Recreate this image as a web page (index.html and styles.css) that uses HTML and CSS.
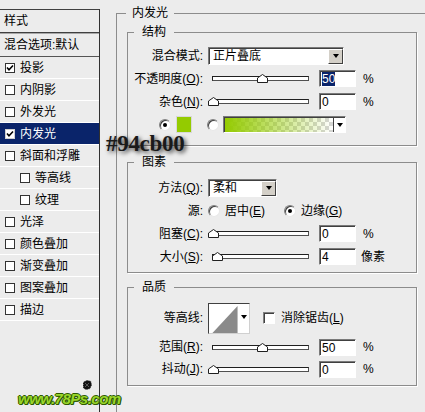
FILE: index.html
```html
<!DOCTYPE html>
<html lang="zh-CN">
<head>
<meta charset="utf-8">
<title>内发光</title>
<link rel="stylesheet" href="styles.css">
</head>
<body>
<div class="app">
  <aside class="sidebar">
    <div class="side-box">
      <div class="side-head">样式</div>
      <ul class="side-list">
        <li class="side-item blend">混合选项:默认</li>
        <li class="side-item"><span class="cb on"><svg viewBox="0 0 8 8"><polyline points="1,3.5 3,5.8 7,1.5"/></svg></span>投影</li>
        <li class="side-item"><span class="cb"></span>内阴影</li>
        <li class="side-item"><span class="cb"></span>外发光</li>
        <li class="side-item active"><span class="cb on"><svg viewBox="0 0 8 8"><polyline points="1,3.5 3,5.8 7,1.5"/></svg></span>内发光</li>
        <li class="side-item"><span class="cb"></span>斜面和浮雕</li>
        <li class="side-item sub"><span class="cb"></span>等高线</li>
        <li class="side-item sub"><span class="cb"></span>纹理</li>
        <li class="side-item"><span class="cb"></span>光泽</li>
        <li class="side-item"><span class="cb"></span>颜色叠加</li>
        <li class="side-item"><span class="cb"></span>渐变叠加</li>
        <li class="side-item"><span class="cb"></span>图案叠加</li>
        <li class="side-item"><span class="cb"></span>描边</li>
      </ul>
    </div>
  </aside>

  <main class="main">
    <fieldset class="outer">
      <legend>内发光</legend>

      <fieldset class="group g-struct">
        <legend>结构</legend>
        <div class="rows">
          <span class="lbl">混合模式:</span>
          <div class="ctl">
            <div class="select w-blend"><span class="sel-text">正片叠底</span><span class="sel-btn"></span></div>
          </div>

          <span class="lbl">不透明度(<u>O</u>):</span>
          <div class="ctl">
            <div class="slider" style="--v:50"><div class="track"></div><svg class="thumb" viewBox="0 0 11 9"><polygon points="0.5,8.5 0.5,4 5.5,0.5 10.5,4 10.5,8.5"/></svg></div>
            <div class="num"><span class="hl">50</span></div>
            <span class="unit">%</span>
          </div>

          <span class="lbl">杂色(<u>N</u>):</span>
          <div class="ctl">
            <div class="slider" style="--v:0"><div class="track"></div><svg class="thumb" viewBox="0 0 11 9"><polygon points="0.5,8.5 0.5,4 5.5,0.5 10.5,4 10.5,8.5"/></svg></div>
            <div class="num">0</div>
            <span class="unit">%</span>
          </div>

          <div class="color-row">
            <span class="radio on"></span>
            <span class="swatch"></span>
            <span class="radio r2"></span>
            <div class="gradbox"><span class="grad"></span><span class="grad-btn"></span></div>
          </div>
        </div>
      </fieldset>

      <fieldset class="group g-elem">
        <legend>图素</legend>
        <div class="rows">
          <span class="lbl">方法(<u>Q</u>):</span>
          <div class="ctl">
            <div class="select w-method"><span class="sel-text">柔和</span><span class="sel-btn"></span></div>
          </div>

          <span class="lbl">源:</span>
          <div class="ctl">
            <span class="opt first"><span class="radio"></span><span class="opt-text">居中(<u>E</u>)</span></span>
            <span class="opt"><span class="radio on"></span><span class="opt-text">边缘(<u>G</u>)</span></span>
          </div>

          <span class="lbl">阻塞(<u>C</u>):</span>
          <div class="ctl">
            <div class="slider" style="--v:0"><div class="track"></div><svg class="thumb" viewBox="0 0 11 9"><polygon points="0.5,8.5 0.5,4 5.5,0.5 10.5,4 10.5,8.5"/></svg></div>
            <div class="num">0</div>
            <span class="unit">%</span>
          </div>

          <span class="lbl">大小(<u>S</u>):</span>
          <div class="ctl">
            <div class="slider" style="--v:4"><div class="track"></div><svg class="thumb" viewBox="0 0 11 9"><polygon points="0.5,8.5 0.5,4 5.5,0.5 10.5,4 10.5,8.5"/></svg></div>
            <div class="num">4</div>
            <span class="unit px">像素</span>
          </div>
        </div>
      </fieldset>

      <fieldset class="group g-quality">
        <legend>品质</legend>
        <div class="rows">
          <span class="lbl">等高线:</span>
          <div class="ctl">
            <div class="contour">
              <svg class="curve" viewBox="0 0 26 28"><polygon points="0,28 26,0 26,28"/></svg>
              <span class="c-arrow"></span>
            </div>
            <span class="cb big"></span>
            <span class="cb-label">消除锯齿(<u>L</u>)</span>
          </div>

          <span class="lbl">范围(<u>R</u>):</span>
          <div class="ctl">
            <div class="slider" style="--v:50"><div class="track"></div><svg class="thumb" viewBox="0 0 11 9"><polygon points="0.5,8.5 0.5,4 5.5,0.5 10.5,4 10.5,8.5"/></svg></div>
            <div class="num">50</div>
            <span class="unit">%</span>
          </div>

          <span class="lbl">抖动(<u>J</u>):</span>
          <div class="ctl">
            <div class="slider" style="--v:0"><div class="track"></div><svg class="thumb" viewBox="0 0 11 9"><polygon points="0.5,8.5 0.5,4 5.5,0.5 10.5,4 10.5,8.5"/></svg></div>
            <div class="num">0</div>
            <span class="unit">%</span>
          </div>
        </div>
      </fieldset>
    </fieldset>
  </main>

  <div class="hex">#94cb00</div>

  <svg class="wm-bug" viewBox="0 0 14 14">
    <path d="M3 4 L7 2 L11 3 L12 7 L10 11 L6 12 L3 10 Z" fill="#111" stroke="#fff" stroke-width="0.8" stroke-dasharray="1 1"/>
    <path d="M5 5 L9 9 M9 5 L5 9" stroke="#555" stroke-width="1"/>
  </svg>
  <div class="wm">www.78Ps.com</div>
</div>
</body>
</html>
```

FILE: styles.css
```css
* { box-sizing: border-box; }

html, body {
  margin: 0;
  padding: 0;
}

body {
  width: 425px;
  height: 412px;
  overflow: hidden;
  background: #ececec;
  font-family: "Liberation Sans", "Noto Sans CJK SC", sans-serif;
  font-size: 12px;
  color: #000;
}

.app {
  position: relative;
  display: flex;
  height: 412px;
  overflow: hidden;
}

/* ---------- sidebar ---------- */
.sidebar {
  flex: none;
  width: 100px;
  padding-top: 9px;
  display: flex;
  flex-direction: column;
}

.side-box {
  flex: 1;
  border-top: 1px solid #404040;
  border-right: 1px solid #303030;
}

.side-head {
  height: 23px;
  line-height: 22px;
  padding-left: 4px;
  border-bottom: 1px solid #404040;
}

.side-list {
  list-style: none;
  margin: 0;
  padding: 0;
  border-top: 1px solid #a8a8a8;
}

.side-item {
  display: flex;
  align-items: center;
  gap: 5px;
  height: 22px;
  line-height: 14px;
  padding-left: 5px;
  border-bottom: 1px solid #ffffff;
  white-space: nowrap;
}

.side-item.blend {
  height: 23px;
  padding-left: 4px;
  border-bottom-color: #555;
}

.side-item.sub { padding-left: 20px; }

.side-item.active {
  background: #0a246a;
  color: #fff;
}

.cb {
  flex: none;
  width: 10px;
  height: 10px;
  background: #fff;
  border: 1px solid #333;
  display: flex;
  align-items: center;
  justify-content: center;
}

.cb svg {
  width: 8px;
  height: 8px;
  fill: none;
  stroke: #000;
  stroke-width: 1.6;
}

.active .cb { border-color: #d0d0d0; }

.cb.big {
  width: 12px;
  height: 12px;
  border-color: #808080 #fff #fff #808080;
  box-shadow: inset 1px 1px 0 #404040;
  margin-left: 13px;
}

.cb-label { margin-left: 6px; line-height: 14px; }

/* ---------- main ---------- */
.main {
  flex: 1;
  min-width: 0;
}

fieldset {
  margin: 0;
  padding: 0;
  min-width: 0;
  border: 1px solid #8c8c8c;
  box-shadow: 1px 1px 0 #fff;
}

legend {
  height: 14px;
  line-height: 14px;
  padding: 0 8px;
  margin-left: 6px;
}

.outer {
  margin: 6px 0 0 16px;
  width: 340px;
  height: 440px;
  padding: 0 10px;
}

.outer > legend {
  margin-left: -1px;
  padding: 0 6px;
}

.group { width: 290px; }

.g-struct { margin-top: 5px; }
.g-elem { margin-top: 9px; }
.g-quality { margin-top: 7px; }

.rows {
  display: grid;
  grid-template-columns: 75px 1fr;
  column-gap: 5px;
  grid-auto-rows: 23px;
  align-items: center;
}

.g-struct .rows { padding: 5px 0 9px; }
.g-elem .rows { padding: 7px 0 4px; }
.g-quality .rows {
  padding: 6px 0 5px;
  grid-template-rows: 36px 22px 22px;
}

.lbl {
  text-align: right;
  white-space: nowrap;
  line-height: 14px;
}

.ctl {
  display: flex;
  align-items: center;
  white-space: nowrap;
  line-height: 14px;
}

/* select */
.select {
  display: flex;
  height: 18px;
  background: #fff;
  border: 1px solid;
  border-color: #7a7a7a #fff #fff #7a7a7a;
  box-shadow: inset 1px 1px 0 #404040;
  padding: 1px 0 0 1px;
}

.w-blend { width: 136px; }
.w-method { width: 69px; }

.sel-text {
  flex: 1;
  padding-left: 3px;
  line-height: 15px;
}

.sel-btn {
  flex: none;
  width: 15px;
  background: #d4d0c8;
  border: 1px solid;
  border-color: #fff #404040 #404040 #fff;
  display: flex;
  align-items: center;
  justify-content: center;
}

.sel-btn::after,
.grad-btn::after,
.c-arrow::after {
  content: "";
  border-left: 3.5px solid transparent;
  border-right: 3.5px solid transparent;
  border-top: 4px solid #000;
}

/* slider */
.slider {
  position: relative;
  flex: none;
  width: 101px;
  height: 11px;
  padding: 3px 0 0 4px;
  margin-right: 10px;
}

.track {
  height: 5px;
  background: #fff;
  border: 1px solid;
  border-color: #202020 #505050 #505050 #202020;
}

.thumb {
  position: absolute;
  top: 1px;
  left: calc(var(--v) * 0.98px);
  width: 11px;
  height: 9px;
  fill: #fff;
  stroke: #202020;
  stroke-width: 1;
}

/* numeric input */
.num {
  flex: none;
  width: 37px;
  height: 17px;
  background: #fff;
  border: 1px solid;
  border-color: #7a7a7a #fff #fff #7a7a7a;
  box-shadow: inset 1px 1px 0 #404040;
  padding: 1px 0 0 2px;
  line-height: 14px;
}

.hl {
  background: #0a246a;
  color: #fff;
}

.unit { margin-left: 7px; }
.unit.px { margin-left: 5px; }

/* radios & colour row */
.radio {
  flex: none;
  width: 12px;
  height: 12px;
  border-radius: 50%;
  background: #fff;
  border: 1px solid;
  border-color: #808080 #e8e8e8 #e8e8e8 #808080;
  box-shadow: inset 1px 1px 0 #404040;
  display: flex;
  align-items: center;
  justify-content: center;
}

.radio.on::after {
  content: "";
  width: 4px;
  height: 4px;
  border-radius: 50%;
  background: #000;
}

.color-row {
  grid-column: 1 / -1;
  display: flex;
  align-items: center;
  padding-left: 31px;
}

.swatch {
  flex: none;
  width: 16px;
  height: 17px;
  margin-left: 5px;
  background: #94cb00;
  border: 1px solid #d8d8d8;
}

.radio.r2 { margin-left: 15px; }

.gradbox {
  flex: none;
  display: flex;
  width: 123px;
  height: 17px;
  margin-left: 4px;
  background: #fff;
  border: 1px solid;
  border-color: #7a7a7a #fff #fff #7a7a7a;
  box-shadow: inset 1px 1px 0 #404040;
  padding: 1px 0 0 1px;
}

.grad {
  flex: 1;
  background:
    linear-gradient(to right, #94cb00 0%, rgba(148, 203, 0, 0.55) 45%, rgba(148, 203, 0, 0) 100%),
    conic-gradient(#d6d6d6 25%, #fff 0 50%, #d6d6d6 0 75%, #fff 0) 0 0 / 8px 8px;
}

.grad-btn {
  flex: none;
  width: 12px;
  background: #fff;
  border-left: 1px solid #404040;
  display: flex;
  align-items: center;
  justify-content: center;
}

/* source options */
.opt {
  display: flex;
  align-items: center;
  gap: 5px;
}

.opt.first { width: 76px; }

/* contour */
.contour {
  flex: none;
  display: flex;
  width: 42px;
  height: 31px;
  background: #fff;
  border: 1px solid;
  border-color: #404040 #d0d0d0 #d0d0d0 #404040;
  padding: 2px 0 0 3px;
}

.curve {
  width: 26px;
  height: 27px;
  fill: #8a8a8a;
}

.c-arrow {
  flex: 1;
  display: flex;
  align-items: center;
  justify-content: center;
  padding-bottom: 4px;
}

/* overlays */
.hex {
  position: absolute;
  left: 106px;
  top: 133px;
  font-family: "Liberation Serif", serif;
  font-weight: bold;
  font-size: 23px;
  line-height: 22px;
  letter-spacing: -0.3px;
  color: #1a1a1a;
  text-shadow: 2px 2px 4px rgba(0, 0, 0, 0.75);
}

.wm {
  position: absolute;
  left: 18px;
  top: 390px;
  font-family: "Liberation Sans", sans-serif;
  font-style: italic;
  font-weight: bold;
  font-size: 15px;
  line-height: 17px;
  letter-spacing: -0.5px;
  color: #9ad62c;
  text-shadow:
    1px 0 0 #2e5a00, -1px 0 0 #2e5a00, 0 1px 0 #2e5a00, 0 -1px 0 #2e5a00,
    1px 1px 0 #2e5a00;
}

.wm-bug {
  position: absolute;
  left: 80px;
  top: 378px;
  width: 14px;
  height: 14px;
}
```
